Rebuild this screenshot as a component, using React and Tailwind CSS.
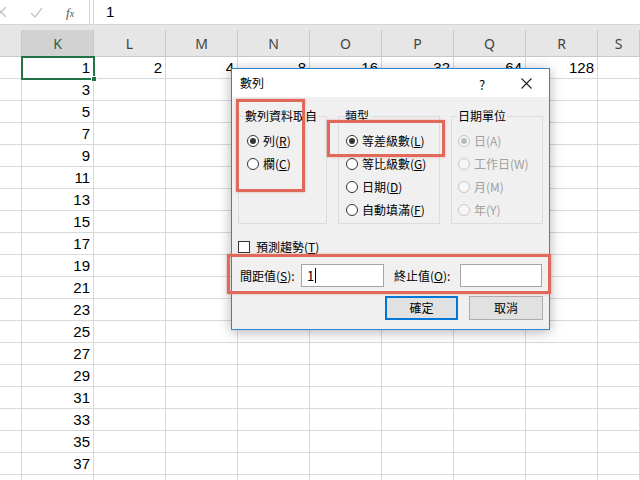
import React from "react";

const cols = [
  { k: "J", w: "w-[22px]" },
  { k: "K", w: "w-[72px]" },
  { k: "L", w: "w-[72px]" },
  { k: "M", w: "w-[72px]" },
  { k: "N", w: "w-[72px]" },
  { k: "O", w: "w-[72px]" },
  { k: "P", w: "w-[72px]" },
  { k: "Q", w: "w-[72px]" },
  { k: "R", w: "w-[72px]" },
  { k: "S", w: "w-[42px]" },
];

const row1 = { K: 1, L: 2, M: 4, N: 8, O: 16, P: 32, Q: 64, R: 128 };

function Radio({ checked, disabled, children }) {
  return (
    <div className="flex items-center h-[23px]">
      <span
        className={
          "relative w-[12px] h-[12px] rounded-full border flex items-center justify-center " +
          (disabled ? "border-[#c6c6c6] bg-[#f7f7f7]" : "border-[#333333] bg-white")
        }
      >
        {checked && (
          <span
            className={
              "w-[6px] h-[6px] rounded-full " + (disabled ? "bg-[#bcbcbc]" : "bg-[#333333]")
            }
          />
        )}
      </span>
      <span className={"ml-[4px] " + (disabled ? "text-[#a0a0a0]" : "text-black")}>{children}</span>
    </div>
  );
}

function Group({ label, w, pl, children }) {
  return (
    <div className={"relative h-[108px] border border-[#dcdcdc] " + w}>
      <span className="absolute -top-[9px] left-[5px] px-[1px] bg-[#f0f0f0] leading-[16px]">
        {label}
      </span>
      <div className={"pt-[12px] flex flex-col " + pl}>{children}</div>
    </div>
  );
}

export default function App() {
  return (
    <div className="relative w-[640px] h-[480px] overflow-hidden bg-white font-['Noto_Sans',sans-serif]">
      {/* Formula bar */}
      <div className="flex h-[25px] border-b border-[#d4d4d4] bg-white">
        <div className="relative w-[90px] h-full border-r border-[#d4d4d4]">
          <svg className="absolute left-[-5px] top-[6px]" width="12" height="12" viewBox="0 0 12 12">
            <path d="M1 1 L11 11 M11 1 L1 11" stroke="#c4c4c4" strokeWidth="1.3" fill="none" />
          </svg>
          <svg className="absolute left-[30px] top-[7px]" width="13" height="11" viewBox="0 0 13 11">
            <path d="M1 6 L5 10 L12 1" stroke="#c4c4c4" strokeWidth="1.3" fill="none" />
          </svg>
          <span className="absolute left-[66px] top-[3px] text-[13px] italic text-[#555555] font-['Liberation_Serif',serif]">
            f<span className="text-[10px]">x</span>
          </span>
        </div>
        <div className="w-[4px] h-full border-r border-[#d4d4d4]" />
        <div className="flex-1 flex items-center pl-[12px] text-[15px] text-black font-['Liberation_Sans',sans-serif]">
          1
        </div>
      </div>

      {/* Column header */}
      <div className="h-[32px] bg-[#e6e6e6] border-b border-[#c8c8c8] flex items-end">
        {cols.map((c) => (
          <div
            key={c.k}
            className={
              c.w +
              " h-[26px] flex items-center justify-center border-r border-[#c8c8c8] text-[14px] " +
              (c.k === "K" ? "bg-[#d2d2d2] text-[#28603f]" : "text-[#444444]")
            }
          >
            {c.k !== "J" ? c.k : ""}
          </div>
        ))}
      </div>

      {/* Grid */}
      <div className="font-['Liberation_Sans',sans-serif] text-[15px] text-black">
        {Array.from({ length: 20 }).map((_, i) => (
          <div key={i} className="flex h-[22px]">
            {cols.map((c) => {
              let v = "";
              if (i < 19 && c.k === "K") v = 2 * i + 1;
              else if (i === 0 && row1[c.k] !== undefined) v = row1[c.k];
              return (
                <div
                  key={c.k}
                  className={
                    c.w +
                    " h-full border-r border-b border-[#d9d9d9] flex items-end justify-end pr-[3px] leading-[20px]"
                  }
                >
                  {v}
                </div>
              );
            })}
          </div>
        ))}
      </div>

      {/* Selected cell */}
      <div className="absolute left-[21px] top-[56px] w-[74px] h-[24px] border-2 border-[#217346]">
        <div className="absolute right-[-4px] bottom-[-4px] w-[6px] h-[6px] bg-[#217346] border border-white" />
      </div>

      {/* Dialog */}
      <div className="absolute left-[231px] top-[68px] w-[319px] h-[262px] border border-[#2b87d3] bg-[#f0f0f0] shadow-[0_2px_12px_rgba(0,0,0,0.3)] text-[12px] text-black font-['Noto_Sans_CJK_TC','Noto_Sans',sans-serif]">
        <div className="relative h-[28px] bg-white flex items-center pl-[8px]">
          <span>數列</span>
          <span className="absolute left-[247px] top-[6px] text-[13px]">?</span>
          <svg className="absolute left-[289px] top-[9px]" width="11" height="11" viewBox="0 0 11 11">
            <path d="M0.5 0.5 L10.5 10.5 M10.5 0.5 L0.5 10.5" stroke="#222222" strokeWidth="1.1" fill="none" />
          </svg>
        </div>

        <div className="flex pl-[6px] pt-[19px] gap-[11px]">
          <Group label="數列資料取自" w="w-[89px]" pl="pl-[8px]">
            <Radio checked>
              列(<span className="underline">R</span>)
            </Radio>
            <Radio>
              欄(<span className="underline">C</span>)
            </Radio>
          </Group>
          <Group label="類型" w="w-[102px]" pl="pl-[7px]">
            <Radio checked>
              等差級數(<span className="underline">L</span>)
            </Radio>
            <Radio>
              等比級數(<span className="underline">G</span>)
            </Radio>
            <Radio>
              日期(<span className="underline">D</span>)
            </Radio>
            <Radio>
              自動填滿(<span className="underline">F</span>)
            </Radio>
          </Group>
          <Group label="日期單位" w="w-[92px]" pl="pl-[6px]">
            <Radio checked disabled>
              日(A)
            </Radio>
            <Radio disabled>工作日(W)</Radio>
            <Radio disabled>月(M)</Radio>
            <Radio disabled>年(Y)</Radio>
          </Group>
        </div>

        <div className="flex items-center h-[16px] mt-[15px] pl-[6px]">
          <span className="w-[12px] h-[12px] border border-[#333333] bg-white" />
          <span className="ml-[6px]">
            預測趨勢(<span className="underline">T</span>)
          </span>
        </div>

        <div className="flex items-center h-[23px] mt-[9px] pl-[8px]">
          <span className="w-[61px]">
            間距值(<span className="underline">S</span>):
          </span>
          <div className="w-[83px] h-[23px] border border-[#a5a5a5] bg-white flex items-center pl-[5px] text-[13px]">
            1<span className="w-[1px] h-[15px] bg-black ml-[1px]" />
          </div>
          <span className="w-[66px] ml-[10px]">
            終止值(<span className="underline">O</span>):
          </span>
          <div className="w-[82px] h-[23px] border border-[#a5a5a5] bg-white" />
        </div>

        <div className="flex justify-end gap-[11px] pr-[6px] mt-[9px]">
          <div className="w-[73px] h-[24px] border-2 border-[#0078d7] bg-[#e1e1e1] flex items-center justify-center">
            確定
          </div>
          <div className="w-[74px] h-[24px] border border-[#adadad] bg-[#e1e1e1] flex items-center justify-center">
            取消
          </div>
        </div>
      </div>

      {/* Red annotation boxes */}
      <div className="absolute left-[236px] top-[99px] w-[69px] h-[93px] border-[3px] border-[#e0695c] shadow-[0_0_2px_rgba(224,105,92,0.6)]" />
      <div className="absolute left-[327px] top-[120px] w-[118px] h-[37px] border-[3px] border-[#e0695c] shadow-[0_0_2px_rgba(224,105,92,0.6)]" />
      <div className="absolute left-[227px] top-[254px] w-[324px] h-[40px] border-[3px] border-[#e0695c] shadow-[0_0_2px_rgba(224,105,92,0.6)]" />
    </div>
  );
}
